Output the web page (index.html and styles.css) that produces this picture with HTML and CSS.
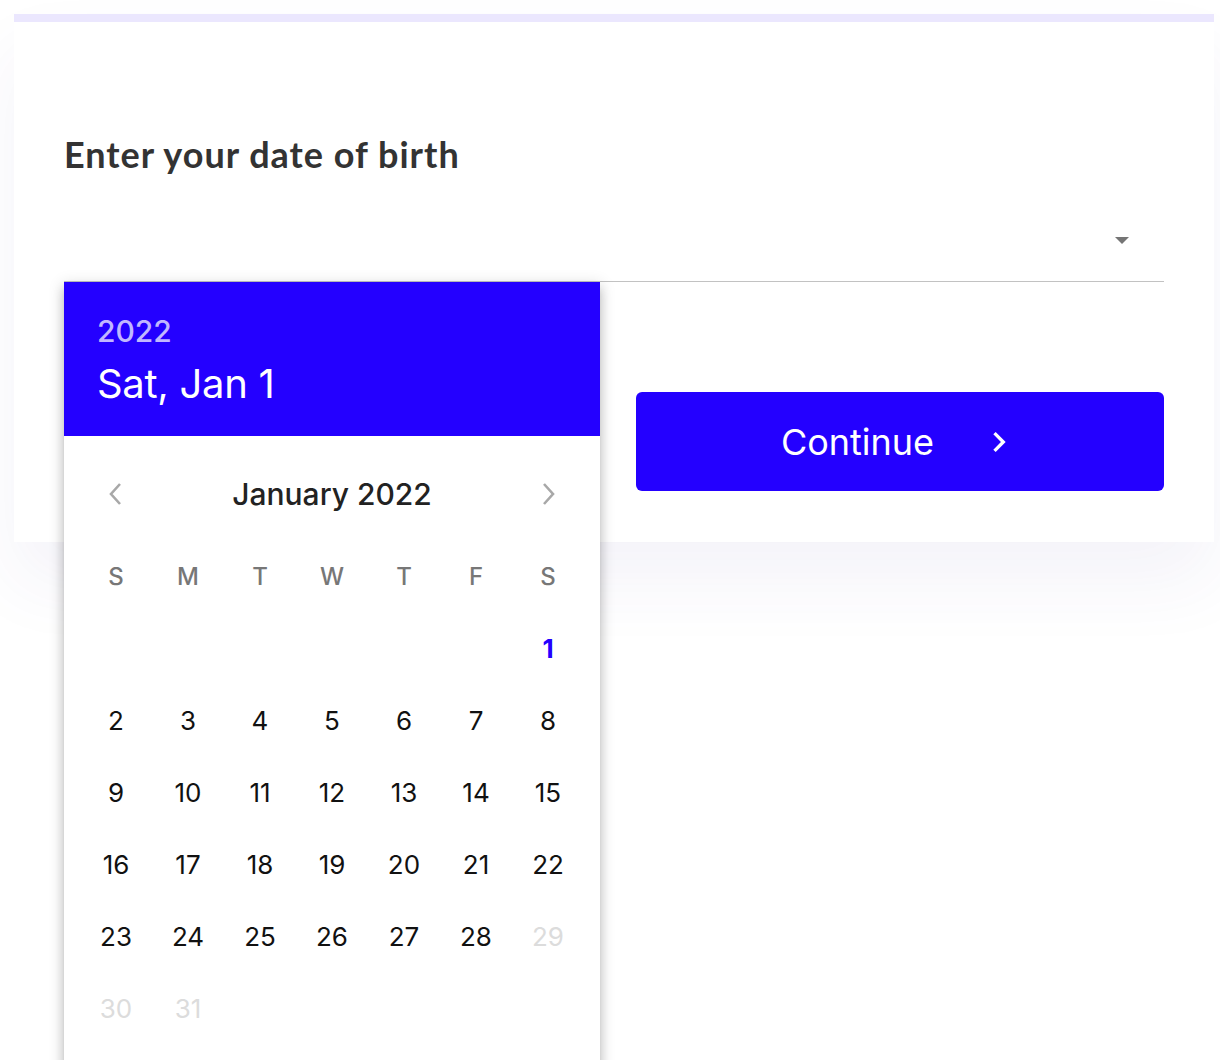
FILE: index.html
```html
<!DOCTYPE html>
<html lang="en">
<head>
<meta charset="utf-8">
<title>Date of birth</title>
<link rel="stylesheet" href="styles.css">
</head>
<body>
<div class="page">
  <div class="card">
    <h1 class="heading">Enter your date of birth</h1>
    <div class="field">
      <svg class="drop" width="14" height="7" viewBox="0 0 14 7"><polygon points="0,0 14,0 7,7" fill="#757575"/></svg>
      <div class="picker">
        <div class="picker-head">
          <div class="picker-year">2022</div>
          <div class="picker-date">Sat, Jan 1</div>
        </div>
        <div class="picker-body">
          <div class="nav">
            <span class="nav-btn">
              <svg width="20" height="28" viewBox="0 0 20 28"><polyline points="14,4 5,14 14,24" fill="none" stroke="#a8a8a8" stroke-width="2.6"/></svg>
            </span>
            <span class="month">January 2022</span>
            <span class="nav-btn">
              <svg width="20" height="28" viewBox="0 0 20 28"><polyline points="6,4 15,14 6,24" fill="none" stroke="#a8a8a8" stroke-width="2.6"/></svg>
            </span>
          </div>
          <div class="grid weekdays">
            <span>S</span><span>M</span><span>T</span><span>W</span><span>T</span><span>F</span><span>S</span>
          </div>
          <div class="grid days">
            <span></span><span></span><span></span><span></span><span></span><span></span><span class="sel">1</span>
            <span>2</span><span>3</span><span>4</span><span>5</span><span>6</span><span>7</span><span>8</span>
            <span>9</span><span>10</span><span>11</span><span>12</span><span>13</span><span>14</span><span>15</span>
            <span>16</span><span>17</span><span>18</span><span>19</span><span>20</span><span>21</span><span>22</span>
            <span>23</span><span>24</span><span>25</span><span>26</span><span>27</span><span>28</span><span class="off">29</span>
            <span class="off">30</span><span class="off">31</span>
          </div>
        </div>
      </div>
    </div>
    <div class="actions">
      <button class="btn">
        <span>Continue</span>
        <svg width="40" height="40" viewBox="0 0 24 24"><path d="M10 6L8.59 7.41 13.17 12l-4.58 4.59L10 18l6-6z" fill="#fff"/></svg>
      </button>
    </div>
  </div>
</div>
</body>
</html>
```

FILE: styles.css
```css
* { box-sizing: border-box; }
html, body { margin: 0; padding: 0; background: #ffffff; }
body { font-family: Inter, "Noto Sans", sans-serif; }

.page {
  padding: 14px 0 0 14px;
  min-height: 1060px;
}

.card {
  width: 1200px;
  background: #fff;
  border-top: 8px solid #ebe7fe;
  padding: 112px 50px 51px;
  box-shadow: 0 40px 70px rgba(60, 50, 150, 0.06);
}

.heading {
  margin: 0;
  font-family: Lato, "Open Sans", sans-serif;
  font-weight: 700;
  font-size: 36px;
  letter-spacing: 1px;
  line-height: 40px;
  color: #333333;
}

.field {
  position: relative;
  margin-top: 52px;
  height: 56px;
  border-bottom: 1px solid #c2c2c2;
  display: flex;
  justify-content: flex-end;
  align-items: flex-start;
  padding-top: 11px;
  padding-right: 35px;
}

.drop { display: block; }

.picker {
  position: absolute;
  left: 0;
  top: calc(100% + 1px);
  width: 536px;
  background: #fff;
  z-index: 5;
  box-shadow: 0 5px 5px -3px rgba(0,0,0,0.2), 0 8px 10px 1px rgba(0,0,0,0.14), 0 3px 14px 2px rgba(0,0,0,0.12);
}

.picker-head {
  background: #2400ff;
  height: 154px;
  padding: 31px 33px 0;
}

.picker-year {
  font-size: 30px;
  line-height: 36px;
  font-weight: 500;
  color: rgba(255,255,255,0.72);
}

.picker-date {
  margin-top: 11px;
  font-size: 40px;
  letter-spacing: -0.3px;
  line-height: 48px;
  font-weight: 400;
  color: #fff;
}

.picker-body {
  padding: 22px 16px 40px;
}

.nav {
  height: 72px;
  display: flex;
  align-items: center;
  justify-content: space-between;
}

.nav-btn {
  width: 72px;
  height: 72px;
  display: flex;
  align-items: center;
  justify-content: center;
}

.month {
  font-size: 30px;
  font-weight: 500;
  color: #222;
}

.grid {
  display: grid;
  grid-template-columns: repeat(7, 72px);
  grid-auto-rows: 72px;
}

.grid span {
  display: flex;
  align-items: center;
  justify-content: center;
}

.weekdays {
  margin-top: 10px;
  font-size: 24px;
  font-weight: 500;
  color: #777777;
}

.days {
  font-size: 26px;
  color: #111;
}

.days .sel {
  color: #2400ff;
  font-weight: 700;
}

.days .off {
  color: #dcdcdc;
}

.actions {
  display: flex;
  justify-content: flex-end;
  margin-top: 110px;
}

.btn {
  width: 528px;
  height: 99px;
  border: 0;
  border-radius: 6px;
  background: #2400ff;
  color: #fff;
  font-family: Inter, sans-serif;
  font-size: 36px;
  font-weight: 400;
  display: flex;
  align-items: center;
  justify-content: center;
  gap: 45px;
  padding: 0;
}

.btn svg { display: block; }
```
